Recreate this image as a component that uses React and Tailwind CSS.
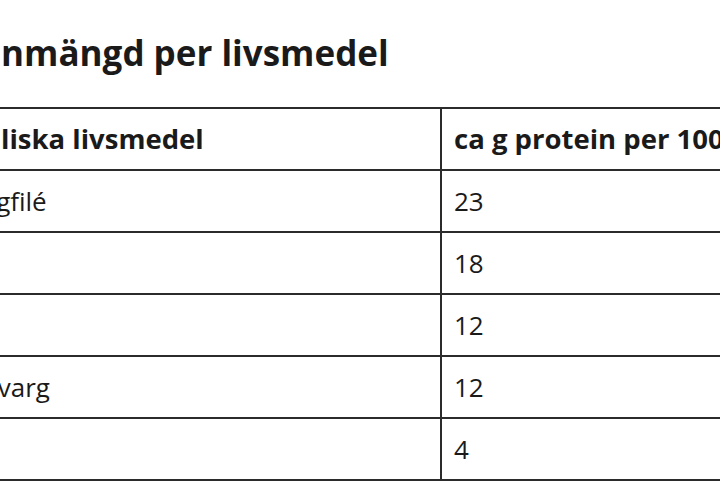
import React from "react";

const rows = [
  { name: "Kycklingfilé", value: "23" },
  { name: "Lax", value: "18" },
  { name: "Ägg", value: "12" },
  { name: "Keso, kvarg", value: "12" },
  { name: "Mjölk", value: "4" },
];

const App = () => {
  return (
    <div
      className="w-[720px] h-[500px] overflow-hidden bg-white text-[#1a1a1a]"
      style={{ fontFamily: '"Open Sans", sans-serif' }}
    >
      <h2 className="ml-[-105px] pt-[31px] text-[35px] leading-[44px] font-bold whitespace-nowrap">
        Proteinmängd per livsmedel
      </h2>

      <div className="ml-[-100px] mt-[32px] w-[1100px] border-t-2 border-[#2b2b2b]">
        <div className="flex h-[62px] border-b-2 border-[#2b2b2b] text-[27.5px] font-bold">
          <div className="flex w-[542px] items-center border-r-2 border-[#2b2b2b] pl-[12px] whitespace-nowrap">
            Animaliska livsmedel
          </div>
          <div className="flex flex-1 items-center pl-[12px] whitespace-nowrap">
            ca g protein per 100 g
          </div>
        </div>
        {rows.map((row) => (
          <div
            key={row.name}
            className="flex h-[62px] border-b-2 border-[#2b2b2b] text-[26px]"
          >
            <div className="flex w-[542px] items-center border-r-2 border-[#2b2b2b] pl-[12px] whitespace-nowrap">
              {row.name}
            </div>
            <div className="flex flex-1 items-center pl-[12px]">{row.value}</div>
          </div>
        ))}
      </div>
    </div>
  );
};

export default App;
